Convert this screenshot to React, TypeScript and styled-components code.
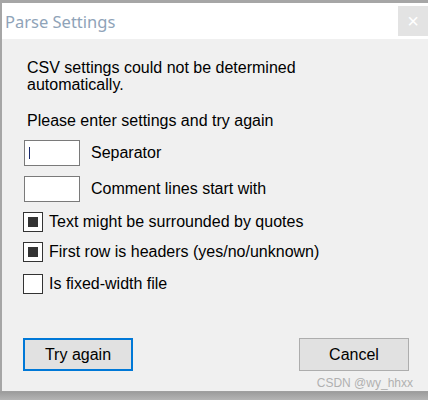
import React from "react";
import styled, { createGlobalStyle } from "styled-components";

const Global = createGlobalStyle`
  html, body { margin: 0; padding: 0; }
  body {
    width: 428px;
    height: 400px;
    overflow: hidden;
    background: linear-gradient(to bottom, #a6a6a6 0px, #a6a6a6 390px, #9c9c9c 392px, #b4b4b4 400px);
    font-family: "Liberation Sans", Arial, sans-serif;
  }
`;

const Stage = styled.div`
  padding: 3px 0 0 2px;
  height: 400px;
  box-sizing: border-box;
`;

const Window = styled.div`
  width: 426px;
  height: 388px;
  display: flex;
  flex-direction: column;
  background: #f0f0f0;
`;

const TitleBar = styled.div`
  height: 36px;
  background: #ffffff;
  display: flex;
  align-items: center;
  justify-content: space-between;
  padding-left: 3px;
`;

const Title = styled.span`
  font-family: "Noto Sans", "Liberation Sans", sans-serif;
  font-size: 16.5px;
  color: #8fa3b8;
`;

const CloseButton = styled.div`
  width: 30px;
  height: 30px;
  background: #e3e3e3;
  color: #ffffff;
  display: flex;
  align-items: center;
  justify-content: center;
  font-size: 20px;
  font-family: "Liberation Sans", sans-serif;
`;

const Body = styled.div`
  flex: 1;
  padding: 20px 19px 0 21px;
  display: flex;
  flex-direction: column;
`;

const Message = styled.p`
  margin: 0;
  font-size: 16px;
  line-height: 17px;
  color: #000;
  padding-left: 4px;
  width: 290px;
`;

const Prompt = styled(Message)`
  margin-top: 19px;
`;

const FieldRow = styled.div<{ $top: number }>`
  display: flex;
  align-items: center;
  gap: 11px;
  margin-top: ${(p) => p.$top}px;
  padding-left: 1px;
  font-size: 16px;
`;

const TextBox = styled.div`
  width: 50px;
  height: 24px;
  border: 1px solid #7a7a7a;
  background: #fff;
  display: flex;
  align-items: center;
  padding-left: 4px;
  box-sizing: content-box;
`;

const Caret = styled.span`
  width: 1px;
  height: 12px;
  background: #1a2a6c;
`;

const CheckRow = styled.div<{ $top: number }>`
  display: flex;
  align-items: center;
  gap: 6px;
  height: 20px;
  margin-top: ${(p) => p.$top}px;
  font-size: 16px;
  color: #000;
`;

const CheckBox = styled.div`
  width: 18px;
  height: 18px;
  border: 1px solid #333;
  background: #fff;
  display: flex;
  align-items: center;
  justify-content: center;
`;

const CheckMark = styled.div`
  width: 10px;
  height: 10px;
  background: #333;
`;

const Buttons = styled.div`
  margin-top: 44px;
  display: flex;
  justify-content: space-between;
`;

const Button = styled.div<{ $default?: boolean }>`
  width: 110px;
  height: 33px;
  box-sizing: border-box;
  background: #e1e1e1;
  border: ${(p) => (p.$default ? "2px solid #0078d7" : "1px solid #adadad")};
  display: flex;
  align-items: center;
  justify-content: center;
  font-size: 16px;
  color: #000;
`;

const Watermark = styled.div`
  align-self: flex-end;
  margin-top: 5px;
  margin-right: -4px;
  font-size: 12px;
  line-height: 15px;
  color: #b0b0b0;
`;

export default function App() {
  return (
    <>
      <Global />
      <Stage>
        <Window>
          <TitleBar>
            <Title>Parse Settings</Title>
            <CloseButton>×</CloseButton>
          </TitleBar>
          <Body>
            <Message>CSV settings could not be determined automatically.</Message>
            <Prompt>Please enter settings and try again</Prompt>
            <FieldRow $top={11}>
              <TextBox>
                <Caret />
              </TextBox>
              Separator
            </FieldRow>
            <FieldRow $top={10}>
              <TextBox />
              Comment lines start with
            </FieldRow>
            <CheckRow $top={10}>
              <CheckBox>
                <CheckMark />
              </CheckBox>
              Text might be surrounded by quotes
            </CheckRow>
            <CheckRow $top={10}>
              <CheckBox>
                <CheckMark />
              </CheckBox>
              First row is headers (yes/no/unknown)
            </CheckRow>
            <CheckRow $top={12}>
              <CheckBox />
              Is fixed-width file
            </CheckRow>
            <Buttons>
              <Button $default>Try again</Button>
              <Button>Cancel</Button>
            </Buttons>
            <Watermark>CSDN @wy_hhxx</Watermark>
          </Body>
        </Window>
      </Stage>
    </>
  );
}
